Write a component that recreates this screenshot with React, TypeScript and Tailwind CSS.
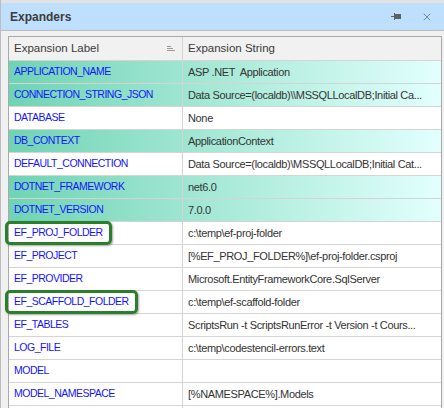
import { X } from 'lucide-react';

type Row = { label: string; value: string; hl?: boolean; boxed?: boolean };

const rows: Row[] = [
  { label: 'APPLICATION_NAME', value: 'ASP .NET  Application', hl: true },
  { label: 'CONNECTION_STRING_JSON', value: 'Data Source=(localdb)\\\\MSSQLLocalDB;Initial Ca...', hl: true },
  { label: 'DATABASE', value: 'None' },
  { label: 'DB_CONTEXT', value: 'ApplicationContext', hl: true },
  { label: 'DEFAULT_CONNECTION', value: 'Data Source=(localdb)\\MSSQLLocalDB;Initial Cat...' },
  { label: 'DOTNET_FRAMEWORK', value: 'net6.0', hl: true },
  { label: 'DOTNET_VERSION', value: '7.0.0', hl: true },
  { label: 'EF_PROJ_FOLDER', value: 'c:\\temp\\ef-proj-folder', boxed: true },
  { label: 'EF_PROJECT', value: '[%EF_PROJ_FOLDER%]\\ef-proj-folder.csproj' },
  { label: 'EF_PROVIDER', value: 'Microsoft.EntityFrameworkCore.SqlServer' },
  { label: 'EF_SCAFFOLD_FOLDER', value: 'c:\\temp\\ef-scaffold-folder', boxed: true },
  { label: 'EF_TABLES', value: 'ScriptsRun -t ScriptsRunError -t Version -t Cours...' },
  { label: 'LOG_FILE', value: 'c:\\temp\\codestencil-errors.text' },
  { label: 'MODEL', value: '' },
  { label: 'MODEL_NAMESPACE', value: '[%NAMESPACE%].Models' },
  { label: '', value: '' }
];

const PinIcon = () => (
  <svg width="11" height="9" viewBox="0 0 11 9" className="text-[#606060]">
    <rect x="0" y="4" width="4" height="1" fill="currentColor" />
    <rect x="3" y="1" width="1" height="7" fill="currentColor" />
    <rect x="4" y="2" width="6" height="4" fill="currentColor" />
    <rect x="4" y="6" width="6" height="1" fill="currentColor" />
  </svg>
);

const SortIcon = () => (
  <svg width="9" height="6" viewBox="0 0 9 6" className="text-[#9a9a9a]">
    <rect x="0" y="0" width="4" height="1" fill="currentColor" />
    <rect x="0" y="2" width="6" height="1" fill="currentColor" />
    <rect x="0" y="4" width="8" height="1" fill="currentColor" />
  </svg>
);

const App = () => {
  return (
    <div
      className="w-[444px] h-[408px] overflow-hidden bg-[#f0f0f0] border-l border-[#bdbdbd] text-[11px]"
      style={{ fontFamily: '"Liberation Sans", Arial, sans-serif' }}
    >
      <div className="h-[3px] bg-[#e2e2e2]"></div>
      <div className="flex h-[27px] items-center bg-[#bfdfff] pl-[9px] pr-[11px]">
        <div className="grow text-[12px] font-bold text-[#3c3c3c]">Expanders</div>
        <div className="flex items-center gap-[19px]">
          <PinIcon />
          <X size={12} strokeWidth={1.4} className="text-[#606060]" />
        </div>
      </div>
      <div className="border-t border-[#bcbcbc] pl-[7px] pr-[2px] pt-[5px]">
        <div className="border border-b-0 border-[#a9a9a9] bg-white">
          <div className="grid h-[24px] grid-cols-[174px_1fr] border-b border-[#d4d4d4] bg-[#f1f1f1] text-[11.5px] text-[#3a3a3a]">
            <div className="flex items-center border-r border-[#d4d4d4] pl-[5px] pr-[6px]">
              <span className="grow">Expansion Label</span>
              <SortIcon />
            </div>
            <div className="flex items-center pl-[5px]">Expansion String</div>
          </div>
          {rows.map((r, i) => (
            <div
              key={i}
              className={
                'grid h-[23px] grid-cols-[174px_1fr] border-b border-[#d4d4d4] ' +
                (r.hl ? 'bg-linear-to-r from-[#6fd3b4] via-[#a9ead8] to-[#e2fffe]' : 'bg-white')
              }
            >
              <div className="flex items-center border-r border-[#d4d4d4] pl-[5px] text-[10.5px] tracking-[-0.5px] text-[#1414ff]">
                <span className="relative flex h-full items-center whitespace-nowrap">
                  {r.label}
                  {r.boxed && (
                    <span className="absolute -left-[9px] -right-[9px] -top-[1px] -bottom-[1px] rounded-[5px] border-[3px] border-[#2b7f2b] shadow-[1px_1px_2px_rgba(0,0,0,0.35)]"></span>
                  )}
                </span>
              </div>
              <div className="flex items-center overflow-hidden whitespace-pre pl-[5px] tracking-[-0.35px] text-[#333333]">
                {r.value}
              </div>
            </div>
          ))}
        </div>
      </div>
    </div>
  );
};

export default App;
